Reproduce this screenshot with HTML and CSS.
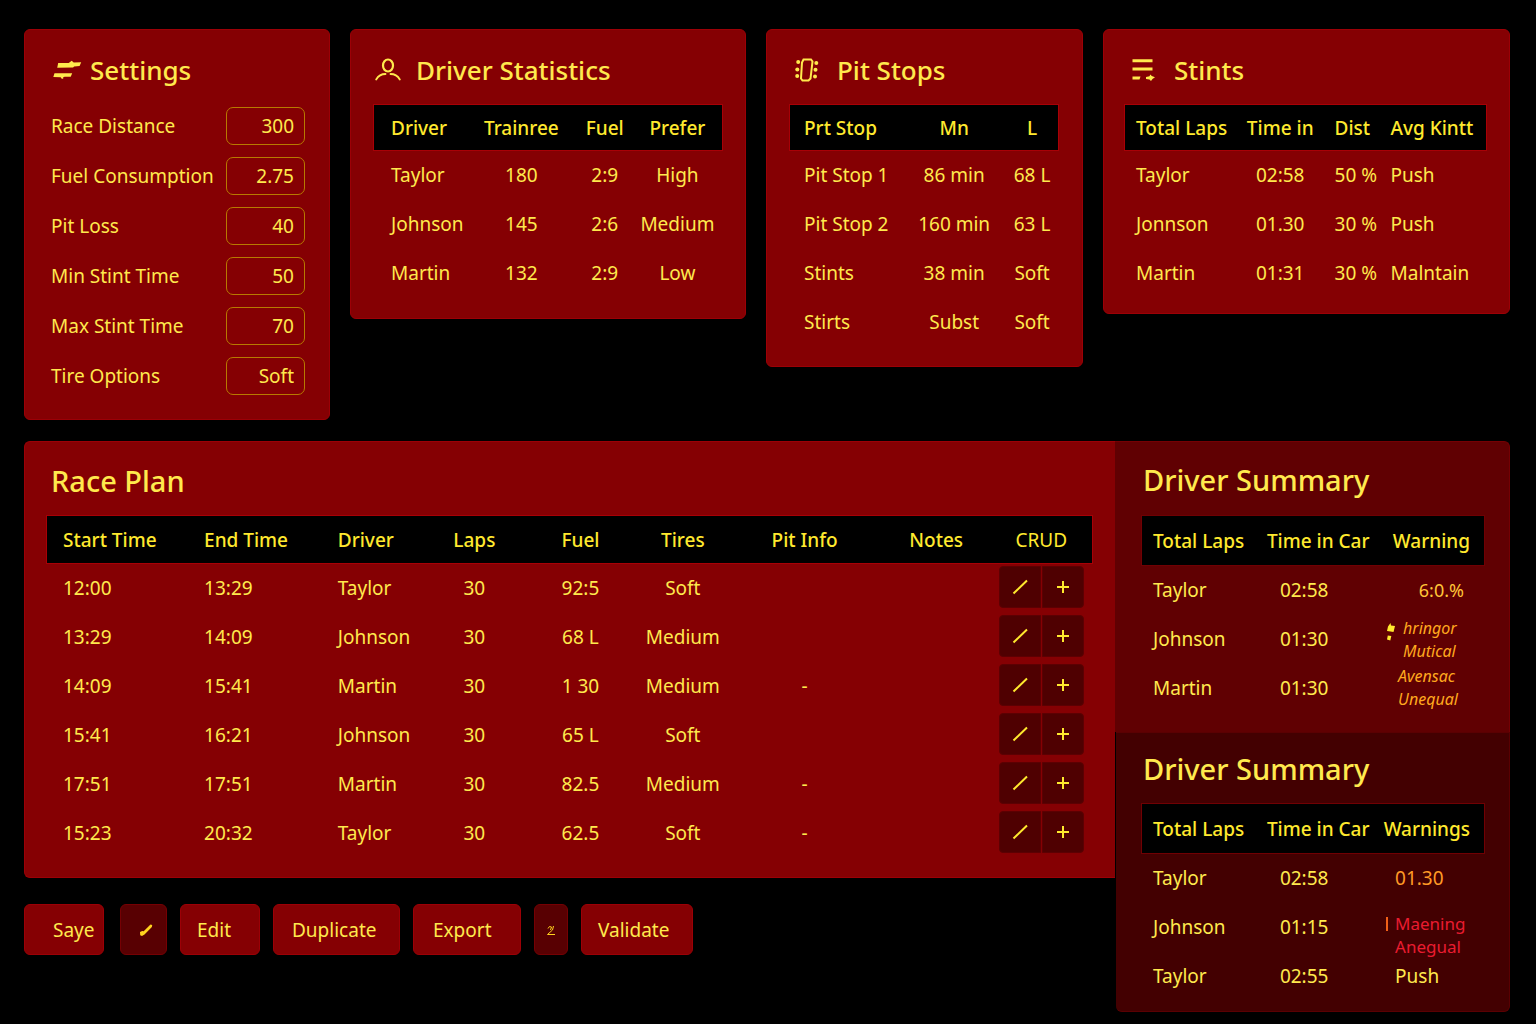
FILE: index.html
```html
<!DOCTYPE html>
<html lang="en">
<head>
    <meta charset="UTF-8">
    <meta name="viewport" content="width=device-width, initial-scale=1.0">
    <title>Race Plan</title>
    <link rel="stylesheet" href="styles.css">
</head>
<body>
    <div class="top-row">
        <section class="card settings">
            <h2>
                <svg class="icon" width="30" height="24" viewBox="0 0 30 24" fill="currentColor"><path d="M6.200 5h10.500l3-2.200 2 1.800 7.500-.4-1.600 3.800-5.500.6-1 1-15.900.1zM2.500 15.200h17.700l-1.500 3.600h-6l-1.500.5v1.500h-1.500l-1-1.500-7.400-.2z"/></svg>
                Settings
            </h2>
            <form>
                <div class="field"><label for="distance">Race Distance</label><input type="text" id="distance" value="300"></div>
                <div class="field"><label for="consumption">Fuel Consumption</label><input type="text" id="consumption" value="2.75"></div>
                <div class="field"><label for="pitloss">Pit Loss</label><input type="text" id="pitloss" value="40"></div>
                <div class="field"><label for="minstint">Min Stint Time</label><input type="text" id="minstint" value="50"></div>
                <div class="field"><label for="maxstint">Max Stint Time</label><input type="text" id="maxstint" value="70"></div>
                <div class="field"><label for="tires">Tire Options</label><select id="tires"><option>Soft</option><option>Medium</option></select></div>
            </form>
        </section>

        <section class="card drivers">
            <h2>
                <svg class="icon" width="26" height="24" viewBox="0 0 26 24" fill="none" stroke="currentColor" stroke-linecap="round"><ellipse cx="13" cy="7.500" rx="5" ry="6" stroke-width="2.200"/><path d="M1.200 21.500c2-3.500 5.500-5.500 9.300-5.500M15.500 16c3.800 0 7.300 2 9.300 5.500" stroke-width="1.800"/></svg>
                Driver Statistics
            </h2>
            <table>
                <colgroup><col><col><col><col></colgroup>
                <thead>
                    <tr><th>Driver</th><th>Trainree</th><th>Fuel</th><th>Prefer</th></tr>
                </thead>
                <tbody>
                    <tr><td>Taylor</td><td>180</td><td>2:9</td><td>High</td></tr>
                    <tr><td>Johnson</td><td>145</td><td>2:6</td><td>Medium</td></tr>
                    <tr><td>Martin</td><td>132</td><td>2:9</td><td>Low</td></tr>
                </tbody>
            </table>
        </section>

        <section class="card pits">
            <h2>
                <svg class="icon" width="24" height="24" viewBox="0 0 24 24" fill="currentColor"><path d="M8.500 1.500h7.500l1.500 2-2 17-2 2H7.500l-1.500-2 1-16z" fill="none" stroke="currentColor" stroke-width="2"/><circle cx="3.200" cy="4" r="2"/><circle cx="2.300" cy="11.500" r="2"/><circle cx="2.200" cy="18" r="2"/><circle cx="21.300" cy="5" r="2"/><circle cx="20.500" cy="11.800" r="2"/><circle cx="20" cy="18.500" r="2"/></svg>
                Pit Stops
            </h2>
            <table>
                <colgroup><col><col><col></colgroup>
                <thead>
                    <tr><th>Prt Stop</th><th>Mn</th><th>L</th></tr>
                </thead>
                <tbody>
                    <tr><td>Pit Stop 1</td><td>86 min</td><td>68 L</td></tr>
                    <tr><td>Pit Stop 2</td><td>160 min</td><td>63 L</td></tr>
                    <tr><td>Stints</td><td>38 min</td><td>Soft</td></tr>
                    <tr><td>Stirts</td><td>Subst</td><td>Soft</td></tr>
                </tbody>
            </table>
        </section>

        <section class="card stints">
            <h2>
                <svg class="icon" width="24" height="24" viewBox="0 0 24 24" fill="currentColor"><path d="M.5 1.200h20v3H.5zM.5 9.500h20v3H.5zM.5 18.500h8l-1 3h-7zM14 19l3.500-.8.800-1.700 1.500 1.500 3.200 1.300-2.500 1.700-1.500 2-1.500-1.500-3.500-.5z"/></svg>
                Stints
            </h2>
            <table>
                <colgroup><col><col><col><col></colgroup>
                <thead>
                    <tr><th>Total Laps</th><th>Time in</th><th>Dist</th><th>Avg Kintt</th></tr>
                </thead>
                <tbody>
                    <tr><td>Taylor</td><td>02:58</td><td>50 %</td><td>Push</td></tr>
                    <tr><td>Jonnson</td><td>01.30</td><td>30 %</td><td>Push</td></tr>
                    <tr><td>Martin</td><td>01:31</td><td>30 %</td><td>Malntain</td></tr>
                </tbody>
            </table>
        </section>
    </div>

    <div class="bottom-row">
        <main class="main-column">
            <section class="card plan">
                <h2>Race Plan</h2>
                <table>
                    <colgroup><col><col><col><col><col><col><col><col><col></colgroup>
                    <thead>
                        <tr><th>Start Time</th><th>End Time</th><th>Driver</th><th>Laps</th><th>Fuel</th><th>Tires</th><th>Pit Info</th><th>Notes</th><th>CRUD</th></tr>
                    </thead>
                    <tbody id="planRows"></tbody>
                </table>
            </section>

            <div class="actions">
                <button type="button" class="save">Saye</button>
                <button type="button" class="small" aria-label="Quick edit"><svg width="14" height="14" viewBox="0 0 14 14" fill="currentColor"><path d="M1 9l2.200-1 1.500.3L11.500 1.500l1.700.5-.3 2L5.500 11.500 3 13 1.200 12.300z"/></svg></button>
                <button type="button" class="edit">Edit</button>
                <button type="button" class="duplicate">Duplicate</button>
                <button type="button" class="export">Export</button>
                <button type="button" class="small narrow" aria-label="Sort"><svg width="10" height="12" viewBox="0 0 10 12" fill="none" stroke="currentColor"><path d="M2 3.500L3.500 1.500 5.500 2 4.500 5M7.500 1L6.500 5 1.500 9.500H9"/></svg></button>
                <button type="button" class="validate">Validate</button>
            </div>
        </main>

        <aside class="side-column">
            <section class="card summary">
                <h2>Driver Summary</h2>
                <table>
                    <colgroup><col><col><col></colgroup>
                    <thead>
                        <tr><th>Total Laps</th><th>Time in Car</th><th>Warning</th></tr>
                    </thead>
                    <tbody>
                        <tr><td>Taylor</td><td>02:58</td><td class="percent">6:0.%</td></tr>
                        <tr>
                            <td>Johnson</td><td>01:30</td>
                            <td>
                                <div class="warning flagged">
                                    <svg width="10" height="20" viewBox="0 0 10 20" fill="currentColor"><path d="M4.500 1L5 3.500l4 .5-1.500 6-3-.5L1 9l1-4.500zM1.800 13.500l3.500.5-1 4.500-3.300-1z"/></svg>
                                    <span>hringor<br>Mutical</span>
                                </div>
                            </td>
                        </tr>
                        <tr><td>Martin</td><td>01:30</td><td><div class="warning plain"><span>Avensac<br>Unequal</span></div></td></tr>
                    </tbody>
                </table>
            </section>

            <section class="card summary dark">
                <h2>Driver Summary</h2>
                <table>
                    <colgroup><col><col><col></colgroup>
                    <thead>
                        <tr><th>Total Laps</th><th>Time in Car</th><th>Warnings</th></tr>
                    </thead>
                    <tbody>
                        <tr><td>Taylor</td><td>02:58</td><td class="late">01.30</td></tr>
                        <tr><td>Johnson</td><td>01:15</td><td><div class="warning alert"><i></i><span>Maening<br>Anegual</span></div></td></tr>
                        <tr><td>Taylor</td><td>02:55</td><td>Push</td></tr>
                    </tbody>
                </table>
            </section>
        </aside>
    </div>

    <script>
        const plan = [
            ['12:00', '13:29', 'Taylor', '30', '92:5', 'Soft', '', ''],
            ['13:29', '14:09', 'Johnson', '30', '68 L', 'Medium', '', ''],
            ['14:09', '15:41', 'Martin', '30', '1 30', 'Medium', '-', ''],
            ['15:41', '16:21', 'Johnson', '30', '65 L', 'Soft', '', ''],
            ['17:51', '17:51', 'Martin', '30', '82.5', 'Medium', '-', ''],
            ['15:23', '20:32', 'Taylor', '30', '62.5', 'Soft', '-', '']
        ];

        const crud = `<div class="crud">
            <button type="button" aria-label="Edit row"><svg width="16" height="16" viewBox="0 0 16 16"><path d="M1.500 14.500L15 1.500"/></svg></button>
            <button type="button" aria-label="Add row"><svg width="14" height="14" viewBox="0 0 14 14"><path d="M7 1v12M1 7h12"/></svg></button>
        </div>`;

        document.getElementById('planRows').innerHTML = plan.map(row =>
            `<tr>${row.map(cell => `<td>${cell}</td>`).join('')}<td>${crud}</td></tr>`
        ).join('');
    </script>
</body>
</html>
```
FILE: styles.css
```css
* {
    box-sizing: border-box;
}

body {
    margin: 0;
    padding: 29px 26px 12px 24px;
    background: #000;
    color: #ffe94d;
    font-family: "Noto Sans", "Open Sans", sans-serif;
    font-size: 19px;
    line-height: 24px;
}

.top-row {
    display: grid;
    grid-template-columns: 306fr 396fr 317fr 407fr;
    gap: 20px;
    align-items: start;
    margin-bottom: 21px;
}

.bottom-row {
    display: grid;
    grid-template-columns: 1091fr 395fr;
    align-items: start;
}

.card {
    padding: 23px 23px 21px;
    background: #850003;
    border: 1px solid #9c0006;
    border-radius: 6px;
}

h2 {
    display: flex;
    align-items: center;
    margin: 0 0 18px;
    font-size: 26px;
    font-weight: 500;
    line-height: 34px;
}

.icon {
    flex: none;
}

/* settings */
.settings { padding: 23px 24px 24px; }
.settings h2 { gap: 8px; padding-left: 3px; margin-bottom: 20px; }

.field {
    display: flex;
    align-items: center;
    justify-content: space-between;
    padding-left: 2px;
    margin-bottom: 12px;
    white-space: nowrap;
}
.field:last-child { margin-bottom: 0; }

.field input,
.field select {
    width: 79px;
    height: 38px;
    padding: 0 10px;
    border: 1px solid #b87a00;
    border-radius: 7px;
    background: transparent;
    color: inherit;
    font: inherit;
    text-align: right;
}
.field select {
    appearance: none;
    text-align-last: right;
}

/* tables */
table {
    width: 100%;
    table-layout: fixed;
    border-collapse: collapse;
    white-space: nowrap;
}
thead {
    background: #000;
    outline: 1px solid #a80006;
}
th {
    height: 45px;
    padding: 0;
    font-weight: 500;
    color: #ffe92e;
}
td {
    height: 49px;
    padding: 0;
    text-align: center;
}
th:first-child,
td:first-child { text-align: left; }

.drivers h2 { gap: 15px; padding-left: 1px; }
.drivers col:nth-child(1) { width: 28.5%; }
.drivers col:nth-child(2) { width: 27.7%; }
.drivers col:nth-child(3) { width: 20.2%; }
.drivers th:first-child,
.drivers td:first-child { padding-left: 17px; }
.drivers th:last-child,
.drivers td:last-child { padding-right: 7px; }

.pits { padding-right: 24px; padding-bottom: 20px; }
.pits h2 { gap: 18px; padding-left: 5px; }
.pits col:nth-child(1) { width: 44.1%; }
.pits col:nth-child(2) { width: 34.3%; }
.pits th:first-child,
.pits td:first-child { padding-left: 14px; }
.pits th:last-child,
.pits td:last-child { padding-left: 6px; }

.stints { padding-left: 21px; padding-bottom: 16px; }
.stints h2 { gap: 18px; padding-left: 7px; }
.stints col:nth-child(1) { width: 31%; }
.stints col:nth-child(2) { width: 24%; }
.stints col:nth-child(3) { width: 15.5%; }
.stints th,
.stints td { padding-left: 11px; text-align: left; }
.stints th:nth-child(2),
.stints td:nth-child(2) { padding-left: 0; text-align: center; }

/* race plan */
.plan {
    padding: 22px 23px 20px 22px;
    border-radius: 6px 0 0 6px;
    border-right: 0;
}
.plan h2 { padding-left: 4px; font-size: 29px; }
.plan col:nth-child(1) { width: 13.5%; }
.plan col:nth-child(2) { width: 12.8%; }
.plan col:nth-child(3) { width: 10%; }
.plan col:nth-child(4) { width: 9.2%; }
.plan col:nth-child(5) { width: 11.1%; }
.plan col:nth-child(6) { width: 8.5%; }
.plan col:nth-child(7) { width: 14.8%; }
.plan col:nth-child(8) { width: 10.4%; }
.plan th { height: 47px; }
.plan th:nth-child(-n+3),
.plan td:nth-child(-n+3) { padding-left: 16px; text-align: left; }
.plan th:last-child { font-weight: 400; }

.crud {
    display: flex;
    gap: 1px;
    width: 85px;
    height: 42px;
    margin: -2px auto 0;
}
.crud button {
    display: flex;
    flex: 1;
    align-items: center;
    justify-content: center;
    padding: 0;
    border: 1px solid #5c0002;
    border-radius: 4px 0 0 4px;
    background: #4f0001;
    color: #ffe92e;
}
.crud button + button { border-radius: 0 4px 4px 0; }
.crud path { fill: none; stroke: currentColor; stroke-width: 2; }

/* driver summary */
.summary {
    padding: 21px 25px 20px 27px;
    background: #600002;
    border-color: #750003;
    border-left: 0;
    border-bottom: 0;
    border-radius: 0 6px 0 0;
}
.summary h2 { padding-left: 1px; margin-bottom: 19px; font-size: 29px; }
.summary col:nth-child(1) { width: 33.3%; }
.summary col:nth-child(2) { width: 36.6%; }
.summary thead { outline-color: #700003; }
.summary th { height: 49px; }
.summary th,
.summary td { padding-left: 11px; text-align: left; }
.summary td:nth-child(2) { padding-left: 24px; }
.summary td:last-child { padding-left: 14px; }
.summary th:last-child { padding: 0 14px 0 0; text-align: right; }
.summary td.percent {
    padding: 0 20px 0 0;
    color: #ffc638;
    font-size: 18px;
    text-align: right;
}
.summary td.late { color: #ff9a26; }

.summary td:has(.warning) { padding-left: 5px; }
.warning {
    display: flex;
    align-items: flex-start;
    gap: 7px;
    color: #ffa91f;
    font-size: 16px;
    font-style: italic;
    line-height: 23px;
}
.warning svg {
    margin-top: 5px;
    color: #ffe92e;
}
.flagged { padding-top: 3px; }
.plain { padding-left: 12px; }
.alert {
    margin: 8px 0 -8px;
    color: #ea1c30;
    font-size: 17px;
    font-style: normal;
}
.alert i {
    width: 2px;
    height: 14px;
    margin-top: 5px;
    background: #f06018;
}

.dark {
    padding: 19px 25px 11px 26px;
    margin-left: 1px;
    background: #430001;
    border: 1px solid #5a0002;
    border-left: 0;
    border-radius: 0 0 6px 6px;
}
.dark h2 { margin-bottom: 18px; }

/* buttons */
.actions {
    display: flex;
    gap: 13px;
    margin-top: 26px;
}
.actions button {
    height: 51px;
    padding: 0 16px;
    border: 1px solid #9c0006;
    border-radius: 6px;
    background: #850003;
    color: inherit;
    font: inherit;
    text-align: left;
}
.actions .save { width: 80px; padding: 0 0 0 28px; margin-right: 3px; }
.actions .edit { width: 80px; }
.actions .duplicate { width: 127px; padding-left: 18px; }
.actions .export { width: 108px; padding-left: 19px; }
.actions .validate { width: 112px; }
.actions .small {
    display: flex;
    align-items: center;
    justify-content: center;
    width: 47px;
    padding: 0 0 0 4px;
    border-color: #750003;
    background: #580002;
    color: #ffd21f;
}
.actions .narrow { width: 34px; padding: 2px 0 0; }
```
